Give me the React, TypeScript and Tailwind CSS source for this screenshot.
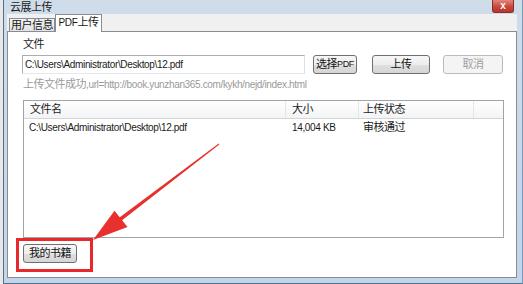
import React from 'react';

const btn =
  'h-[19px] flex items-center justify-center rounded-[3px] border border-[#707070] bg-[linear-gradient(#f7f7f7,#ededed_50%,#e0e0e0_51%,#d5d5d5)] text-[#111]';

// Tahoma-like latin text is narrower than the CJK run around it
const latin = 'text-[10px] tracking-[-0.35px]';

export default function App() {
  return (
    <div className="relative w-[523px] h-[284px] flex overflow-hidden bg-[#dfe3e8] font-['Liberation_Sans','Noto_Sans_CJK_SC',sans-serif] text-[11px] leading-[13px] tracking-[-0.5px] text-[#1a1a1a]">
      {/* desktop strip behind the window */}
      <div className="w-[3px] bg-[#e6e8eb]" />

      {/* window */}
      <div className="flex-1 flex flex-col border-l border-r border-b border-l-[#5d6d80] border-r-[#7c98b8] border-b-[#4f7590] bg-[linear-gradient(#cfdcea,#c3d5e9)]">
        <div className="h-[14px] flex items-start justify-between">
          <span className="pl-[6px] pt-[1px] text-[#1b1b1b]">云展上传</span>
          <div className="mr-[8px] w-[22px] h-[13px] flex items-center justify-center rounded-b-[3px] border border-t-0 border-[#8c3027] bg-[linear-gradient(#e0877c,#c9473b_55%,#b93428)] text-white text-[10px] font-bold leading-none tracking-normal">
            x
          </div>
        </div>

        <div className="flex-1 flex flex-col ml-[3px] mr-[5px] mb-[5px] bg-[#f0f0f0]">
          {/* tabs */}
          <div className="h-[17px] flex items-end pl-[2px]">
            <div className="h-[13px] w-[46px] flex items-center justify-center border border-b-0 border-[#898c95] bg-[linear-gradient(#f3f3f3,#e3e3e3)]">
              用户信息
            </div>
            <div className="relative z-10 -mb-[1px] h-[18px] w-[47px] flex items-center justify-center border border-b-0 border-[#898c95] bg-white pb-[2px]">
              <span className={latin}>PDF</span>上传
            </div>
          </div>

          {/* panel */}
          <div className="flex-1 flex flex-col border border-[#898c95] bg-white pl-[14px] pt-[6px]">
            <span className="ml-[1px]">文件</span>
            <div className="mt-[4px] flex items-center">
              <div className={`${latin} w-[283px] h-[19px] flex items-center pl-[2px] border border-[#abadb3] border-b-[#e3e9ef] border-r-[#dbdfe6]`}>
                C:\Users\Administrator\Desktop\12.pdf
              </div>
              <div className={`${btn} ml-[8px] w-[44px]`}>
                选择<span className="text-[9px] tracking-[-0.4px]">PDF</span>
              </div>
              <div className={`${btn} ml-[15px] w-[58px]`}>上传</div>
              <div className="ml-[13px] w-[60px] h-[19px] flex items-center justify-center rounded-[3px] border border-[#b9bcbf] bg-[#f4f4f4] text-[#a0a0a0]">
                取消
              </div>
            </div>
            <span className="mt-[4px] ml-[1px] text-[#9a9a9a]">
              上传文件成功<span className={latin}>,url=http://book.yunzhan365.com/kykh/nejd/index.html</span>
            </span>

            {/* list */}
            <div className="mt-[9px] ml-[1px] w-[481px] h-[138px] border border-[#a0a4ab] flex flex-col">
              <div className="h-[18px] flex border-b border-[#d5d5d5] bg-[linear-gradient(#ffffff,#f3f4f6)]">
                <div className="w-[262px] pl-[6px] flex items-center border-r border-[#e3e5e8]">文件名</div>
                <div className="w-[73px] pl-[6px] flex items-center border-r border-[#e3e5e8]">大小</div>
                <div className="w-[115px] pl-[4px] flex items-center border-r border-[#e3e5e8]">上传状态</div>
                <div className="flex-1" />
              </div>
              <div className="h-[17px] flex items-center">
                <div className={`${latin} w-[262px] pl-[5px]`}>C:\Users\Administrator\Desktop\12.pdf</div>
                <div className={`${latin} w-[73px] pl-[6px]`}>14,004 KB</div>
                <div className="w-[115px] pl-[4px]">审核通过</div>
              </div>
            </div>

            <div className={`${btn} mt-[6px] ml-[1px] w-[54px]`}>我的书籍</div>
          </div>
        </div>
      </div>

      {/* annotation: red box and arrow */}
      <div className="absolute left-[16px] top-[238px] w-[77px] h-[34px] border-[3px] border-[#e8282b]" />
      <svg className="absolute left-0 top-0 pointer-events-none" width="523" height="284" viewBox="0 0 523 284">
        <polygon points="219.3,144.4 218.7,143.6 116.8,219.4 119.2,222.6" fill="#e8302e" />
        <polygon points="93,240 127.5,227 114.5,210.8" fill="#e8302e" />
      </svg>
    </div>
  );
}
